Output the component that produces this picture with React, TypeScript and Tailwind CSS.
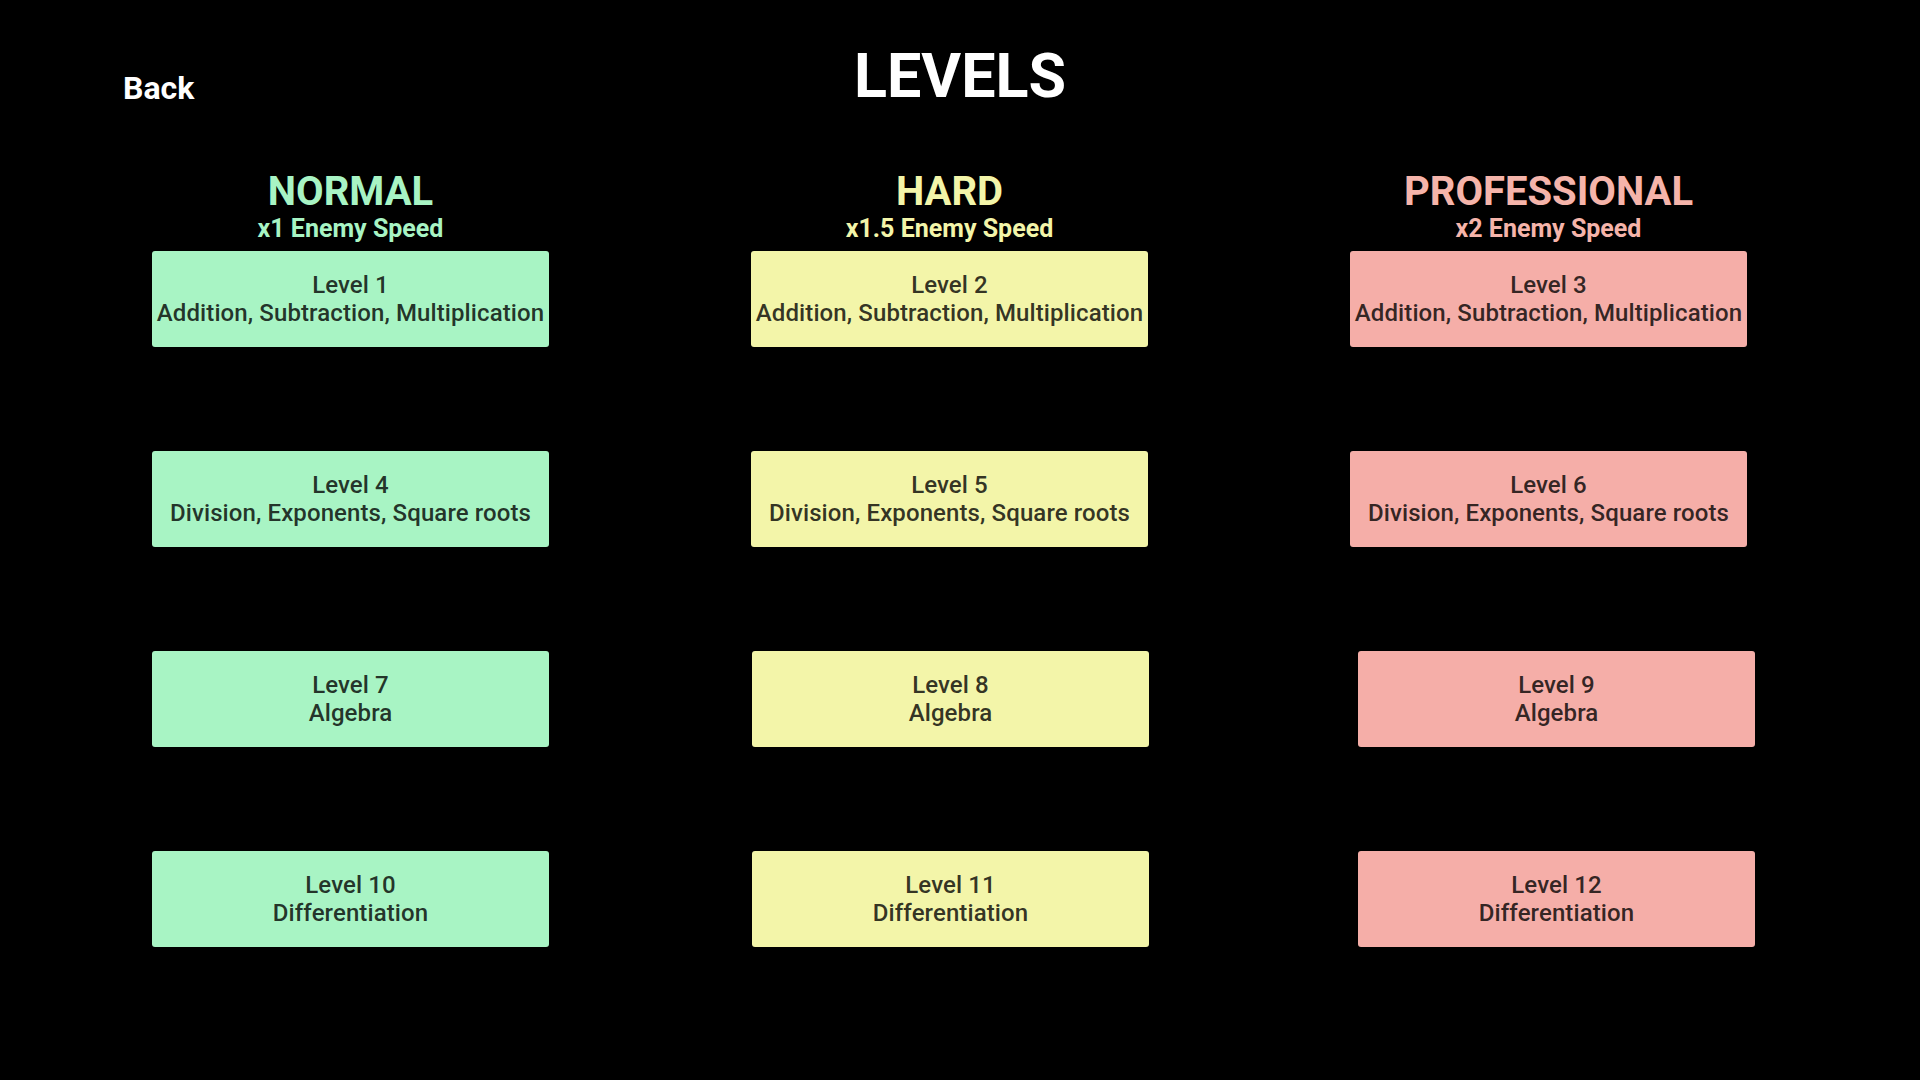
const DIFFICULTIES = [
  {
    name: 'NORMAL',
    speed: 'x1 Enemy Speed',
    text: 'text-[#a8f4c4]',
    card: 'bg-[#a8f4c4]',
    shift: ['', '', '', ''],
  },
  {
    name: 'HARD',
    speed: 'x1.5 Enemy Speed',
    text: 'text-[#f3f5a9]',
    card: 'bg-[#f3f5a9]',
    shift: ['', '', 'ml-[1px]', 'ml-[1px]'],
  },
  {
    name: 'PROFESSIONAL',
    speed: 'x2 Enemy Speed',
    text: 'text-[#f5b4aa]',
    card: 'bg-[#f5aea8]',
    shift: ['', '', 'ml-[8px]', 'ml-[8px]'],
  },
];

const TOPICS = [
  'Addition, Subtraction, Multiplication',
  'Division, Exponents, Square roots',
  'Algebra',
  'Differentiation',
];

const LevelCard = ({ level, topic, color, shift }: { level: number; topic: string; color: string; shift: string }) => (
  <button
    type="button"
    className={`flex h-[96px] w-[397px] flex-col items-center justify-center rounded-[3px] text-[24px] font-medium leading-[28px] tracking-[0.1px] text-black/80 ${color} ${shift}`}
  >
    <span>Level {level}</span>
    <span className="whitespace-nowrap">{topic}</span>
  </button>
);

export default function App() {
  return (
    <div className="min-h-screen bg-black pt-[46px] text-white" style={{ fontFamily: 'Roboto, "Noto Sans", sans-serif' }}>
      <header className="grid grid-cols-[1fr_auto_1fr]">
        <button type="button" className="mt-[26px] ml-[123px] justify-self-start self-start text-[32px] font-bold leading-none text-white">
          Back
        </button>
        <h1 className="text-[61px] font-bold leading-none">LEVELS</h1>
        <div />
      </header>

      <main className="mt-[65px] flex gap-[202px] pl-[152px]">
        {DIFFICULTIES.map((difficulty, col) => (
          <section key={difficulty.name} className="flex w-[397px] flex-col">
            <div className={`flex flex-col items-center font-bold ${difficulty.text}`}>
              <h2 className="text-[40px] leading-none">{difficulty.name}</h2>
              <p className="mt-[4px] text-[25px] leading-none">{difficulty.speed}</p>
            </div>
            <div className="mt-[10px] flex flex-col gap-[104px]">
              {TOPICS.map((topic, row) => (
                <LevelCard
                  key={topic}
                  level={row * 3 + col + 1}
                  topic={topic}
                  color={difficulty.card}
                  shift={difficulty.shift[row]}
                />
              ))}
            </div>
          </section>
        ))}
      </main>
    </div>
  );
}
